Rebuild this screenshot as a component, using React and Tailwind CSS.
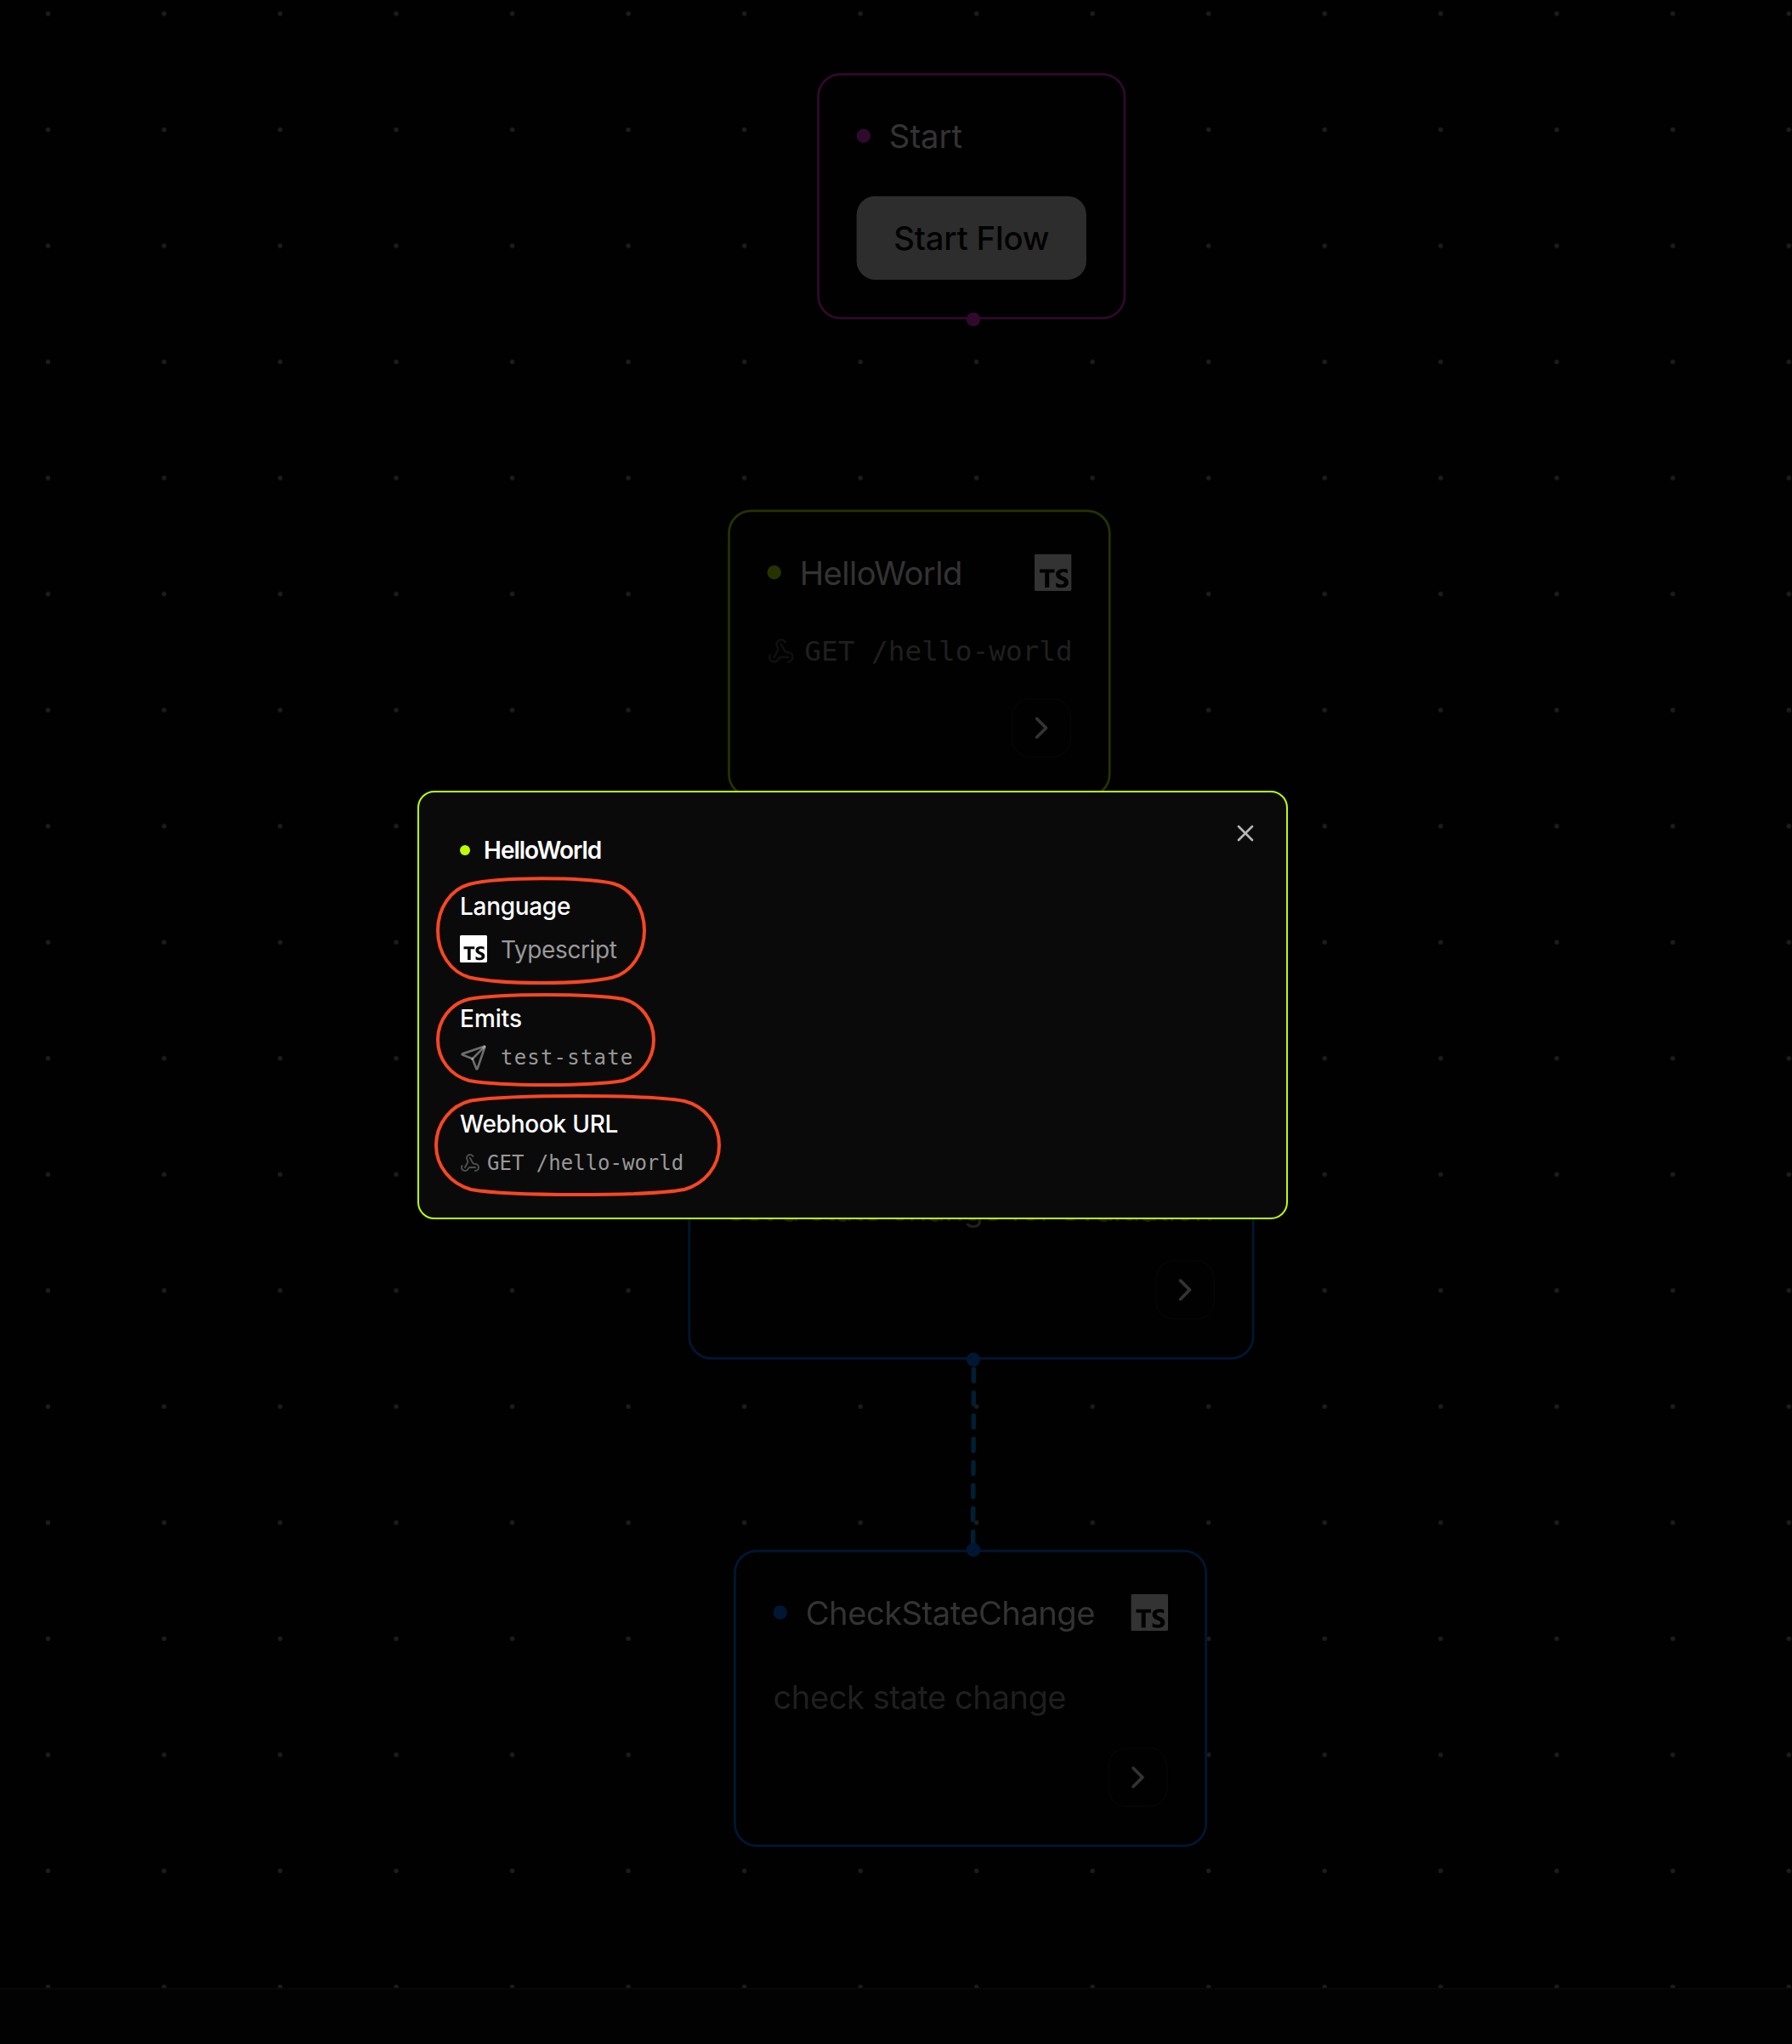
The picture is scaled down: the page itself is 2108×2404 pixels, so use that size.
import React from "react";
import { ChevronRight, Send, Webhook, X } from "lucide-react";
import { SiTypescript } from "react-icons/si";

function Handle({ className }) {
  return <span className={`absolute -left-[3px] -top-[3px] h-[6px] w-[6px] rounded-full ${className}`} />;
}

function NodeHeader({ name, dot, typed }) {
  return (
    <div className="flex h-5 items-center justify-between">
      <div className="flex items-center gap-2">
        <span className={`h-[6px] w-[6px] rounded-full ${dot}`} />
        <span className={`translate-y-[0.3px] whitespace-nowrap text-sm leading-5 text-[#333333] ${typed ? "tracking-[-0.2px]" : ""}`}>{name}</span>
      </div>
      {typed && <SiTypescript className="h-4 w-4 translate-x-[0.15px] text-[#333333]" />}
    </div>
  );
}

function NodeText({ children }) {
  return <p className="mt-4 translate-y-[0.4px] whitespace-nowrap text-sm leading-5 tracking-[-0.19px] text-[#1f1f1f]">{children}</p>;
}

function OpenButton() {
  return (
    <div className="mt-3 flex justify-end">
      <button className="flex h-[26px] w-[26px] translate-x-[0.15px] items-center justify-center rounded-lg border border-[#040404]">
        <ChevronRight className="h-4 w-4 text-[#333333]" strokeWidth={2} />
      </button>
    </div>
  );
}

function Node({ className, children }) {
  return <section className={`absolute left-0 top-0 rounded-[10px] border bg-[#010101] p-4 ${className}`}>{children}</section>;
}

function Flow() {
  return (
    <div className="relative h-[2338px] overflow-hidden">
      <svg className="absolute inset-0 h-full w-full">
        <defs>
          <pattern id="dots" x="-11.75" y="-52.2" width="136.52" height="136.52" patternUnits="userSpaceOnUse">
            <circle cx="68.25" cy="68.25" r="2.73" fill="#1c1c1c" />
          </pattern>
        </defs>
        <rect width="100%" height="100%" fill="url(#dots)" />
      </svg>
      <div className="absolute left-0 top-0 h-[856px] w-[772px] origin-top-left scale-[2.73]">
        <Node className="h-[106px] w-[133px] translate-x-[352.1px] translate-y-[31.5px] border-[#300a2c]">
          <NodeHeader name="Start" dot="bg-[#300a2c]" />
          <button className="mt-4 flex h-9 w-full items-center justify-center rounded-lg bg-[#2d2d2d] text-sm font-medium tracking-[-0.05px] text-[#020202]">
            <span className="translate-y-[0.3px]">Start Flow</span>
          </button>
        </Node>
        <Node className="h-[124px] w-[165px] translate-x-[313.6px] translate-y-[219.6px] border-[#263300]">
          <NodeHeader name="HelloWorld" dot="bg-[#263300]" typed />
          <div className="mt-4 flex h-4 items-center gap-1">
            <Webhook className="h-3 w-3 shrink-0 text-[#0f0f0f]" />
            <span className="whitespace-nowrap font-['DejaVu_Sans_Mono',monospace] text-xs leading-4 text-[#1f1f1f]">GET /hello-world</span>
          </div>
          <OpenButton />
        </Node>
        <Node className="h-[128px] w-[244px] translate-x-[296.5px] translate-y-[457.7px] border-[#001733]">
          <NodeHeader name="SetStateChange" dot="bg-[#001733]" typed />
          <NodeText>set a state change for evaluation</NodeText>
          <OpenButton />
        </Node>
        <Node className="h-[128px] w-[204px] translate-x-[316.15px] translate-y-[667.7px] border-[#001733]">
          <NodeHeader name="CheckStateChange" dot="bg-[#001733]" typed />
          <NodeText>check state change</NodeText>
          <OpenButton />
        </Node>
        <svg className="absolute left-[415px] top-[585px] h-[84px] w-[10px]" viewBox="0 0 10 84" fill="none">
          <path d="M4.55 4.9 C4.55 50 4.3 40 4.3 82" stroke="#001f33" strokeWidth="2" strokeLinecap="round" strokeDasharray="5 5" />
        </svg>
        <div className="absolute left-0 top-0 translate-x-[419.4px] translate-y-[137.6px]">
          <Handle className="bg-[#300a2c]" />
        </div>
        <div className="absolute left-0 top-0 translate-x-[419.4px] translate-y-[585.7px]">
          <Handle className="bg-[#001733]" />
        </div>
        <div className="absolute left-0 top-0 translate-x-[419.4px] translate-y-[667.7px]">
          <Handle className="bg-[#001733]" />
        </div>
      </div>
    </div>
  );
}

function Annotations() {
  return (
    <svg className="pointer-events-none absolute -left-[2px] -top-[2px] h-[504px] w-[1024px]" viewBox="491 930 1024 504" fill="none" stroke="#f84623" strokeWidth="4">
      <path d="M515 1094.5C515 1068 530 1046 552 1040C574 1034.500 608 1033.300 637 1033.300C666 1033.300 700 1034.500 721 1039C743 1045 758 1068 758 1094.500C758 1121 743 1143 721 1149.500C700 1154.500 666 1156 637 1156C608 1156 574 1154.500 552 1149.500C530 1143 515 1121 515 1094.500Z" />
      <path d="M515 1223C515 1200 530 1180 552 1175C574 1171.200 610 1170 642 1170C674 1170 710 1171.200 733 1175C754 1180 769 1200 769 1223C769 1246 754 1265 733 1271C710 1274.800 674 1276 642 1276C610 1276 574 1274.800 552 1271C530 1265 515 1246 515 1223Z" />
      <path d="M513 1347C513 1322 530 1300 554 1294.500C580 1290.500 635 1289 679 1289C724 1289 780 1290.500 805 1295C829 1301 846 1322 846 1347C846 1372 829 1392 805 1399C780 1403.500 724 1405 679 1405C635 1405 580 1403.500 554 1399C530 1392 513 1372 513 1347Z" />
    </svg>
  );
}

function Dialog() {
  return (
    <div className="fixed left-[491px] top-[930px] h-[504px] w-[1024px] rounded-[20px] border-2 border-[#beff00] bg-[#0a0a0a] p-12 text-[28px] leading-10 text-white">
      <h2 className="flex items-center gap-4 font-semibold tracking-[-1px]">
        <span className="h-3 w-3 rounded-full bg-[#beff00]" />
        <span className="pt-px leading-[39px]">HelloWorld</span>
      </h2>
      <h3 className="mt-[26px] pt-px font-medium leading-[39px] tracking-[-0.3px]">Language</h3>
      <div className="mt-[14px] flex h-8 items-center gap-4 tracking-[-0.38px] text-[#999999]">
        <SiTypescript className="h-8 w-8 text-white" />
        <span className="pt-px">Typescript</span>
      </div>
      <h3 className="mt-[46px] pt-px font-medium leading-[39px]">Emits</h3>
      <div className="mt-[10px] flex h-8 items-center gap-4">
        <Send className="h-8 w-8 text-white/40" strokeWidth={2} />
        <span className="font-['DejaVu_Sans_Mono',monospace] text-2xl tracking-wider text-[#999999]">test-state</span>
      </div>
      <h3 className="mt-[42px] pt-px font-medium leading-[39px] tracking-[-0.25px]">Webhook URL</h3>
      <div className="mt-[10px] flex h-8 items-center gap-2">
        <Webhook className="h-6 w-6 text-[#4d4d4d]" />
        <span className="font-['DejaVu_Sans_Mono',monospace] text-2xl text-[#999999]">GET /hello-world</span>
      </div>
      <button className="absolute right-8 top-8">
        <X className="h-8 w-8 text-[#b5b5b5]" />
      </button>
      <Annotations />
    </div>
  );
}

export default function App() {
  return (
    <main className="flex h-[2404px] w-[2108px] flex-col overflow-hidden bg-[#010101] font-[Inter,sans-serif]">
      <Flow />
      <footer className="flex-1 border-t-2 border-[#070707] bg-[#020202]" />
      <Dialog />
    </main>
  );
}
